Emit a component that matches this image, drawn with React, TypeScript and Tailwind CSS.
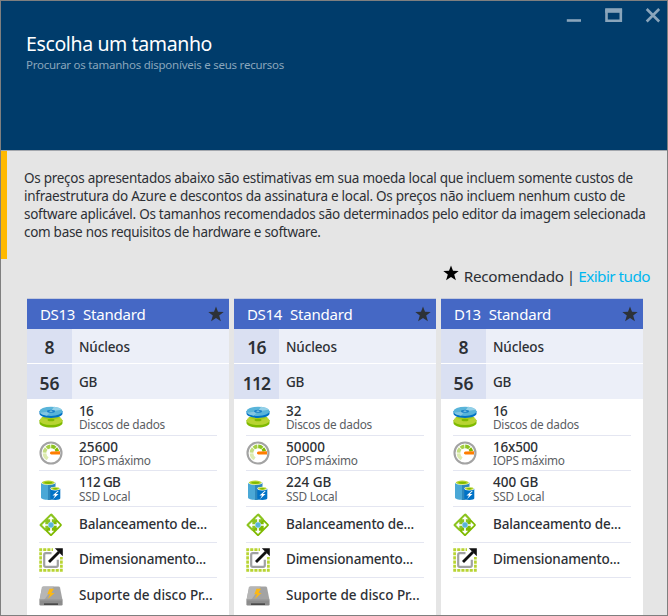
import type { ReactNode } from "react";

type Feature = { icon: ReactNode; value: string; label?: string; fit?: string };

type Size = {
  name: string;
  nameFit: string;
  cores: string;
  memory: string;
  memoryFit: string;
  features: Feature[];
};

function Star({ className }: { className: string }) {
  return (
    <svg viewBox="0 0 16 16" className={className} fill="currentColor">
      <path d="M8 0.4 L10 5.8 L15.7 6 L11.2 9.5 L12.9 15.2 L8 11.9 L3.1 15.2 L4.8 9.5 L0.3 6 L6 5.8 Z" />
    </svg>
  );
}

function DisksIcon() {
  return (
    <svg viewBox="0 0 24 24" className="size-6">
      <path d="M.5 15v3c0 2.600 5.200 4.500 11.500 4.500s11.500-1.900 11.500-4.500v-3z" fill="#7fba00" />
      <ellipse cx="12" cy="15.500" rx="11.500" ry="4.600" fill="#b8d432" />
      <path d="M12 15.500 2 12.500C6 10.500 18 10.500 22 12.500z" fill="#a5cc22" />
      <ellipse cx="12" cy="15" rx="3.500" ry="1.300" fill="#7fba00" />
      <path d="M.5 6v2.600c0 2.600 5.200 4.300 11.500 4.300s11.500-1.700 11.500-4.300V6z" fill="#0072c6" />
      <ellipse cx="12" cy="6.300" rx="11.500" ry="4.600" fill="#59b4d9" />
      <path d="M12 6.300 15 1.850c4 .5 6.800 1.400 8 3z" fill="#93d0e8" />
      <path d="M12 6.300 1 7.700c1.200 1.700 4 2.600 7 3z" fill="#84c6e2" />
      <ellipse cx="12" cy="6.300" rx="4" ry="1.500" fill="#1a80c8" />
      <ellipse cx="12" cy="6.200" rx="1.600" ry=".6" fill="#8ccbe6" />
    </svg>
  );
}

function GaugeIcon() {
  return (
    <svg viewBox="0 0 24 24" className="size-6" fill="none">
      <circle cx="12" cy="12" r="10.500" fill="#fff" stroke="#a3a3a3" strokeWidth="2.100" />
      <path d="M8.700 17.800A6.600 6.600 0 0 1 5.500 12.400" stroke="#dcebb0" strokeWidth="3.600" />
      <path d="M5.500 11.600A6.600 6.600 0 0 1 7.200 7.500" stroke="#c3dd80" strokeWidth="3.600" />
      <path d="M7.800 7A6.600 6.600 0 0 1 11.400 5.400" stroke="#a5cf45" strokeWidth="3.600" />
      <path d="M12.200 5.400A6.600 6.600 0 0 1 16.300 7" stroke="#8cc320" strokeWidth="3.600" />
      <path d="M16.800 7.500A6.600 6.600 0 0 1 18.400 10.300" stroke="#7fba00" strokeWidth="3.600" />
      <path d="M21 10.300v3.300H12.300c-1.800-.2-1.800-2.800 0-3z" fill="#ff7d00" />
    </svg>
  );
}

function SsdIcon() {
  return (
    <svg viewBox="0 0 24 24" className="size-6">
      <path d="M2 5.500V20.500c0 1.400 3.100 2.400 7.200 2.400h2V5.500z" fill="#4aa8d6" />
      <path d="M9 5.500v17.400h2.500l5-2V5.500z" fill="#2f88bb" />
      <ellipse cx="9.300" cy="5.600" rx="7.300" ry="2.500" fill="#fff" />
      <ellipse cx="9.300" cy="5.600" rx="6.500" ry="2" fill="#b8d432" />
      <ellipse cx="9.300" cy="5.800" rx="4" ry="1.100" fill="#7fba00" />
      <path d="M11.300 11.800h10v9.400c0 1-2.200 1.700-5 1.700s-5-.7-5-1.700z" fill="#0072c6" />
      <ellipse cx="16.300" cy="11.600" rx="5" ry="1.900" fill="#fff" />
      <ellipse cx="16.300" cy="11.600" rx="4.300" ry="1.400" fill="#b8d432" />
      <ellipse cx="16.300" cy="11.700" rx="2.500" ry=".7" fill="#7fba00" />
      <path d="M18.600 14 13.500 18.500h2.600l-2 3.400 5.400-5h-2.700l3-2.900z" fill="#fff" />
    </svg>
  );
}

function BalanceIcon() {
  return (
    <svg viewBox="0 0 24 24" className="size-6">
      <rect x="3.900" y="3.900" width="16.200" height="16.200" rx="1.500" fill="#7fba00" transform="rotate(45 12 12)" />
      <path d="M12 .4 .8 11.200c-.4.5-.4 1.100 0 1.600L6.300 18 18 6.300 13 .8z" fill="#8cc420" />
      <g stroke="#fff" strokeWidth="1.700">
        <path d="M12 4.500v15M4.500 12h15" />
      </g>
      <g fill="#fff">
        <path d="M12 3 15.200 6.300H8.800z" />
        <path d="M12 21 15.200 17.700H8.800z" />
        <path d="M3 12 6.300 8.800v6.400z" />
        <path d="M21 12 17.700 8.800v6.400z" />
      </g>
      <circle cx="12" cy="12" r="2.900" fill="#59b4d9" stroke="#c4e2ee" strokeWidth=".6" />
    </svg>
  );
}

function ScaleIcon() {
  return (
    <svg viewBox="0 0 24 24" className="size-6" fill="none">
      <rect x="1.600" y="1.600" width="20.800" height="20.800" stroke="#b8d432" strokeWidth="2.700" strokeDasharray="3.100 1.060" strokeDashoffset="1.550" />
      <path d="M14 0h10v9h-3.500L14 4z" fill="#fff" />
      <path d="M12.500 5.200H6.700a1.500 1.500 0 0 0-1.500 1.500v10.600a1.500 1.500 0 0 0 1.500 1.500h10.600a1.500 1.500 0 0 0 1.500-1.500v-5.600" stroke="#a0a1a2" strokeWidth="2.200" />
      <path d="M10 14 20 4" stroke="#111" strokeWidth="2.900" />
      <path d="M15.800 .3H23.800V8.200z" fill="#111" />
    </svg>
  );
}

function PremiumDiskIcon() {
  return (
    <svg viewBox="0 0 24 24" className="size-6">
      <path d="M4.500 2.500h15c.8 0 1.300.4 1.500 1.100l2.500 12.400H.5L3 3.600c.2-.7.700-1.100 1.500-1.100z" fill="#a3a3a3" />
      <path d="M4.500 2.500H15L5 16H.5L3 3.600c.2-.7.700-1.100 1.500-1.100z" fill="#b6b6b6" />
      <rect x=".4" y="15.500" width="23.200" height="6" rx="1.200" fill="#8c8c8c" />
      <path d="M.6 15.500h22.800v1H.6z" fill="#9c9c9c" />
      <path d="M5 19.300h14v1.700H5z" fill="#4a4a4a" />
      <path d="M10.500 4.800 8.300 10.200h2.800L8.800 15 15.600 9h-3.200L15 4.800z" fill="#fcb813" />
    </svg>
  );
}

const balance: Feature = { icon: <BalanceIcon />, value: "Balanceamento de...", fit: "tracking-[-0.19px]" };
const scale: Feature = { icon: <ScaleIcon />, value: "Dimensionamento...", fit: "tracking-[-0.2px]" };
const premium: Feature = { icon: <PremiumDiskIcon />, value: "Suporte de disco Pr...", fit: "tracking-[-0.02px]" };

const sizes: Size[] = [
  {
    name: "DS13",
    nameFit: "tracking-[-0.35px]",
    cores: "8",
    memory: "56",
    memoryFit: "",
    features: [
      { icon: <DisksIcon />, value: "16", label: "Discos de dados", fit: "tracking-[-0.6px]" },
      { icon: <GaugeIcon />, value: "25600", label: "IOPS máximo", fit: "tracking-[0.1px]" },
      { icon: <SsdIcon />, value: "112 GB", label: "SSD Local", fit: "tracking-[-0.7px]" },
      balance,
      scale,
      premium,
    ],
  },
  {
    name: "DS14",
    nameFit: "tracking-[-0.35px]",
    cores: "16",
    memory: "112",
    memoryFit: "tracking-[-0.9px]",
    features: [
      { icon: <DisksIcon />, value: "32", label: "Discos de dados" },
      { icon: <GaugeIcon />, value: "50000", label: "IOPS máximo", fit: "tracking-[0.1px]" },
      { icon: <SsdIcon />, value: "224 GB", label: "SSD Local" },
      balance,
      scale,
      premium,
    ],
  },
  {
    name: "D13",
    nameFit: "tracking-[-0.5px]",
    cores: "8",
    memory: "56",
    memoryFit: "",
    features: [
      { icon: <DisksIcon />, value: "16", label: "Discos de dados", fit: "tracking-[-0.6px]" },
      { icon: <GaugeIcon />, value: "16x500", label: "IOPS máximo", fit: "tracking-[-0.2px]" },
      { icon: <SsdIcon />, value: "400 GB", label: "SSD Local" },
      balance,
      scale,
    ],
  },
];

const labelFit: Record<string, string> = {
  "Discos de dados": "tracking-[-0.25px]",
  "IOPS máximo": "tracking-[-0.32px]",
  "SSD Local": "tracking-[-0.22px]",
};

const rowHeights = ["h-[37px]", "h-[35px]", "h-9", "h-9", "h-[35px]", "h-9"];
const textOffsets = ["pt-[5px]", "pt-1", "pt-1 gap-px", "leading-[35px]", "leading-[33px]", "leading-[35px]"];

function SizeCard({ size }: { size: Size }) {
  return (
    <div className="flex w-[202px] flex-col border-t border-[#c3c9dc] bg-white text-[#2d3035]">
      <div className="flex h-[30px] items-center justify-between bg-[#4568c5] pr-[5px] pl-[13px]">
        <div className="flex gap-2 text-[15px] leading-[30px] text-white">
          <span className={size.nameFit}>{size.name}</span>
          <span className="tracking-[-0.2px]">Standard</span>
        </div>
        <Star className="size-4 text-[#2d3238]" />
      </div>
      <div className="flex h-[34px] bg-[#eceff8]">
        <div className="w-[45px] bg-[#dae0f2] text-center text-[17.500px] leading-9 font-semibold">
          <span className={size.cores === "16" ? "tracking-[-0.8px]" : ""}>{size.cores}</span>
        </div>
        <div className="pl-[7px] text-[13.500px] leading-9 font-medium tracking-[-0.12px]">Núcleos</div>
      </div>
      <div className="mt-px flex h-[35px] bg-[#eceff8]">
        <div className="w-[45px] bg-[#dae0f2] text-center text-[17.500px] leading-[38px] font-semibold">
          <span className={size.memoryFit}>{size.memory}</span>
        </div>
        <div className="pl-[7px] text-[13.500px] leading-9 font-medium tracking-[-0.3px]">GB</div>
      </div>
      <div className="flex flex-col px-3">
        {size.features.map((f, i) => (
          <div
            key={i}
            className={`flex whitespace-nowrap ${rowHeights[i]} ${i < 5 ? "border-b border-[#e4e6f1]" : ""}`}
          >
            <div className="flex w-10 shrink-0 items-center">{f.icon}</div>
            {f.label ? (
              <div className={`flex flex-col ${textOffsets[i]}`}>
                <span className={`text-[13.500px] leading-[14px] font-medium ${f.fit ?? ""}`}>{f.value}</span>
                <span className={`text-[11.800px] leading-3 text-[#5b5e63] ${labelFit[f.label]}`}>{f.label}</span>
              </div>
            ) : (
              <span className={`text-[13.500px] font-medium ${textOffsets[i]} ${f.fit ?? ""}`}>{f.value}</span>
            )}
          </div>
        ))}
      </div>
    </div>
  );
}

export default function App() {
  return (
    <div className="flex h-[616px] w-[668px] flex-col overflow-hidden border border-[#7f7f7f] bg-[#e5e5e5] font-['Noto_Sans','Open_Sans',sans-serif]">
      <header className="flex h-[150px] shrink-0 justify-between border-b border-[#a3a7ad] bg-[#003c6b]">
        <div className="pt-[29px] pl-[25px]">
          <h1 className="text-[19.500px] leading-7 font-normal tracking-[-0.38px] text-white">Escolha um tamanho</h1>
          <p className="text-[11.500px] leading-[14px] tracking-[-0.24px] text-[#8aa6bc]">
            Procurar os tamanhos disponíveis e seus recursos
          </p>
        </div>
        <svg viewBox="0 0 96 16" className="mt-1.5 mr-1.5 h-4 w-24" fill="none" stroke="#8aa5bb">
          <path d="M1.800 13.500h14.200" strokeWidth="2.600" />
          <path d="M41.500 3.500h14.300v10.300h-14.300z" strokeWidth="2.600" />
          <path d="M40.200 3.500h16.900" strokeWidth="4.600" />
          <path d="m81.700 2 12.500 12.500M94.200 2 81.700 14.500" strokeWidth="2.600" />
        </svg>
      </header>

      <section className="h-[108px] shrink-0 border-l-[6px] border-[#ffb900] pt-[18px] pl-[17px] text-[13.500px] leading-[18px] whitespace-nowrap text-[#2d3035]">
        <p className="tracking-[-0.27px]">
          Os preços apresentados abaixo são estimativas em sua moeda local que incluem somente custos de
        </p>
        <p className="tracking-[-0.26px]">
          infraestrutura do Azure e descontos da assinatura e local. Os preços não incluem nenhum custo de
        </p>
        <p className="tracking-[-0.28px]">
          software aplicável. Os tamanhos recomendados são determinados pelo editor da imagem selecionada
        </p>
        <p className="tracking-[-0.29px]">com base nos requisitos de hardware e software.</p>
      </section>

      <div className="flex h-[39px] shrink-0 justify-end pt-[5px] pr-[17px] text-[15.300px] leading-6 text-[#2d3035]">
        <Star className="mt-px mr-[5px] size-4 text-black" />
        <span className="tracking-[-0.35px]">Recomendado</span>
        <span className="mx-[3px]">|</span>
        <a className="tracking-[-0.55px] text-[#00b7f0]">Exibir tudo</a>
      </div>

      <main className="flex grow gap-[5px] pl-[26px]">
        {sizes.map((s) => (
          <SizeCard key={s.name} size={s} />
        ))}
      </main>
    </div>
  );
}
